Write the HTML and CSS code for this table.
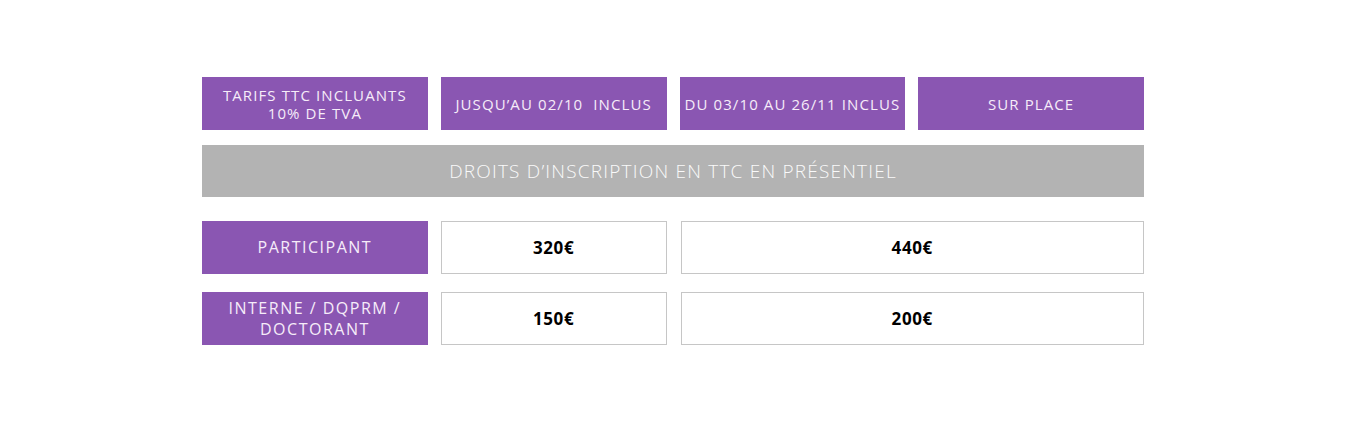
FILE: index.html
```html
<!DOCTYPE html>
<html lang="fr">
<head>
<meta charset="utf-8">
<title>Tarifs</title>
<link rel="stylesheet" href="styles.css">
</head>
<body>
<div class="table">
  <div class="head">
    <div class="cell purple">TARIFS TTC INCLUANTS<br>10% DE TVA</div>
    <div class="cell purple">JUSQU’AU 02/10&nbsp; INCLUS</div>
    <div class="cell purple">DU 03/10 AU 26/11 INCLUS</div>
    <div class="cell purple">SUR PLACE</div>
  </div>
  <div class="banner">DROITS D’INSCRIPTION EN TTC EN PRÉSENTIEL</div>
  <div class="rows">
    <div class="row">
      <div class="cell purple label">PARTICIPANT</div>
      <div class="cell value">320€</div>
      <div class="cell value wide">440€</div>
    </div>
    <div class="row">
      <div class="cell purple label">INTERNE / DQPRM /<br>DOCTORANT</div>
      <div class="cell value">150€</div>
      <div class="cell value wide">200€</div>
    </div>
  </div>
</div>
</body>
</html>
```

FILE: styles.css
```css
* { box-sizing: border-box; }
html, body { margin: 0; padding: 0; background: #ffffff; }
body {
  font-family: "Open Sans", "Liberation Sans", sans-serif;
  width: 1366px;
  height: 424px;
}
.table {
  width: 942px;
  margin-left: 202px;
  padding-top: 77px;
}
.head, .row {
  display: grid;
  grid-template-columns: repeat(4, 1fr);
  column-gap: 13px;
}
.cell {
  height: 53px;
  display: flex;
  align-items: center;
  justify-content: center;
  text-align: center;
  white-space: nowrap;
}
.purple {
  background: #8a56b2;
  color: #f6ecf9;
  font-size: 15px;
  line-height: 18px;
  letter-spacing: 1.1px;
}
.label {
  font-size: 16px;
  line-height: 21px;
  letter-spacing: 1.5px;
}
.banner {
  margin-top: 15px;
  height: 52px;
  background: #b3b3b3;
  color: #fafafa;
  display: flex;
  align-items: center;
  justify-content: center;
  font-size: 19px;
  font-weight: 300;
  letter-spacing: 1.2px;
}
.rows {
  margin-top: 24px;
  display: flex;
  flex-direction: column;
  row-gap: 18px;
}
.value {
  border: 1px solid #c6c6c6;
  background: #fff;
  color: #000;
  font-weight: 700;
  font-size: 17px;
  letter-spacing: 0.6px;
}
.wide {
  grid-column: span 2;
  margin-left: 1px;
}
```
